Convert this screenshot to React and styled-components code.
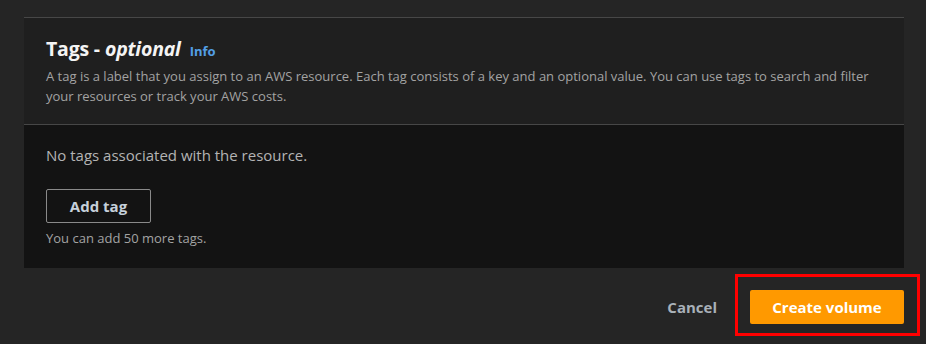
import React from "react";
import styled, { createGlobalStyle } from "styled-components";

const GlobalStyle = createGlobalStyle`
  *,
  *::before,
  *::after {
    box-sizing: border-box;
  }
  body {
    margin: 0;
    padding: 0;
    font-family: "Open Sans", "Noto Sans", Arial, sans-serif;
    background-color: #252525;
  }
`;

function App() {
  return (
    <Page>
      <GlobalStyle />
      <Panel>
        <PanelHeader>
          <Title>
            Tags - <em>optional</em>
            <InfoLink href="#">Info</InfoLink>
          </Title>
          <Description>
            A tag is a label that you assign to an AWS resource. Each tag
            consists of a key and an optional value. You can use tags to search
            and filter your resources or track your AWS costs.
          </Description>
        </PanelHeader>
        <PanelBody>
          <EmptyText>No tags associated with the resource.</EmptyText>
          <SecondaryButton type="button">Add tag</SecondaryButton>
          <Hint>You can add 50 more tags.</Hint>
        </PanelBody>
      </Panel>
      <Footer>
        <LinkButton type="button">Cancel</LinkButton>
        <Highlight>
          <PrimaryButton type="button">Create volume</PrimaryButton>
        </Highlight>
      </Footer>
    </Page>
  );
}

const Page = styled.div`
  width: 926px;
  height: 344px;
  padding: 17px 22px 0 24px;
  overflow: hidden;
`;
const Panel = styled.section`
  background-color: #1f1f1f;
  border-top: 1px solid #474747;
`;
const PanelHeader = styled.div`
  padding: 19px 22px 18px;
  border-bottom: 1px solid #474747;
`;
const Title = styled.h2`
  margin: 0;
  display: flex;
  align-items: baseline;
  font-size: 19.5px;
  line-height: 24px;
  font-weight: 700;
  color: #f4f4f4;
  letter-spacing: -0.2px;
  em {
    font-style: italic;
    margin-left: 5px;
  }
`;
const InfoLink = styled.a`
  margin-left: 9px;
  font-size: 13px;
  font-weight: 700;
  letter-spacing: 0;
  color: #539fe5;
  text-decoration: none;
`;
const Description = styled.p`
  margin: 3px 0 0;
  font-size: 13px;
  line-height: 20px;
  color: #a3a3a3;
`;
const PanelBody = styled.div`
  background-color: #131313;
  padding: 20px 22px 21px;
  display: flex;
  flex-direction: column;
  align-items: flex-start;
`;
const EmptyText = styled.p`
  margin: 0;
  font-size: 15px;
  line-height: 20px;
  color: #b3b3b3;
`;
const SecondaryButton = styled.button`
  margin-top: 24px;
  width: 105px;
  height: 34px;
  border: 1px solid #8a8a8a;
  border-radius: 2px;
  background: transparent;
  font-family: inherit;
  font-size: 15px;
  font-weight: 700;
  color: #c6d0da;
  cursor: pointer;
`;
const Hint = styled.p`
  margin: 6px 0 0;
  font-size: 13px;
  line-height: 18px;
  color: #a3a3a3;
`;
const Footer = styled.div`
  display: flex;
  justify-content: flex-end;
  align-items: center;
  padding-top: 22px;
`;
const LinkButton = styled.button`
  border: none;
  background: transparent;
  font-family: inherit;
  font-size: 15px;
  font-weight: 700;
  color: #a9b1b9;
  padding: 0;
  margin-right: 33px;
  cursor: pointer;
`;
const Highlight = styled.div`
  position: relative;
  &::after {
    content: "";
    position: absolute;
    top: -16px;
    left: -15px;
    right: -16px;
    bottom: -12px;
    border: 3px solid #ff0000;
    pointer-events: none;
  }
`;
const PrimaryButton = styled.button`
  display: block;
  width: 154px;
  height: 34px;
  border: none;
  border-radius: 2px;
  background-color: #ff9900;
  font-family: inherit;
  font-size: 15px;
  font-weight: 700;
  color: #ffffff;
  cursor: pointer;
`;

export default App;
